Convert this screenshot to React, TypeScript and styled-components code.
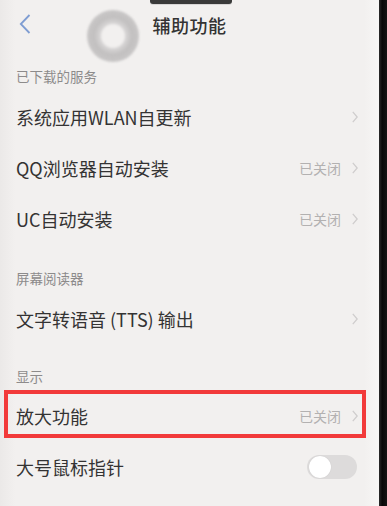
import styled, { createGlobalStyle } from "styled-components";

const BG = "#f2f0ef";
const TEXT = "#343333";
const MUTED = "#8d8b8b";
const HINT = "#b3b1b1";
const RED = "#f23a3a";

const GlobalStyle = createGlobalStyle`
  html, body {
    margin: 0;
    padding: 0;
    background: #0d0d0d;
  }
  body {
    font-family: "Noto Sans CJK SC", "Noto Sans", sans-serif;
  }
`;

const Device = styled.div`
  display: flex;
  width: 387px;
  height: 506px;
  overflow: hidden;
`;

const Screen = styled.div`
  position: relative;
  flex: 1;
  background: linear-gradient(90deg, #ebe9e8 0%, ${BG} 4%, ${BG} 96%, #f7f6f5 100%);
  display: flex;
  flex-direction: column;
`;

const Bezel = styled.div`
  width: 8px;
  background: linear-gradient(90deg, #2a2a2a, #080808 40%, #141414);
`;

const Notch = styled.div`
  position: absolute;
  top: 0;
  left: 150px;
  width: 82px;
  height: 4px;
  background: #3a3a3a;
  border-radius: 0 0 3px 3px;
  box-shadow: 0 1px 0 #d8d6d6;
`;

const NavBar = styled.div`
  position: relative;
  height: 50px;
  display: flex;
  align-items: center;
  justify-content: center;
`;

const Back = styled.svg`
  position: absolute;
  left: 19px;
  top: 14px;
`;

const Title = styled.div`
  font-size: 18px;
  font-weight: 500;
  color: ${TEXT};
  letter-spacing: 0.5px;
`;

const TouchRing = styled.div`
  position: absolute;
  left: 87px;
  top: 10px;
  width: 52px;
  height: 52px;
  border-radius: 50%;
  background: radial-gradient(
    circle,
    #f2f0ef 0 11px,
    #d6d4d4 13px,
    #c2c0c0 19px,
    #c9c7c7 26px
  );
  filter: blur(0.8px);
`;

const SectionHeader = styled.div<{ $top: number; $bottom: number }>`
  padding: ${(p) => p.$top}px 16px ${(p) => p.$bottom}px;
  font-size: 13.5px;
  line-height: 17px;
  color: ${MUTED};
`;

const Row = styled.div`
  position: relative;
  height: 51px;
  display: flex;
  align-items: center;
  padding: 0 21px 0 16px;
`;

const Label = styled.div`
  flex: 1;
  font-size: 18px;
  color: ${TEXT};
  white-space: nowrap;
`;

const Status = styled.span`
  font-size: 14px;
  color: ${HINT};
  margin-right: 11px;
`;

const Chevron = () => (
  <svg width="6" height="12" viewBox="0 0 6 12">
    <path d="M0.8 0.8 L5.2 6 L0.8 11.2" fill="none" stroke="#cfcdcd" strokeWidth="1.3" />
  </svg>
);

const Highlight = styled.div`
  position: absolute;
  left: 4px;
  right: 13px;
  top: 0;
  height: 48px;
  border: 4px solid ${RED};
  box-sizing: border-box;
  pointer-events: none;
`;

const Toggle = styled.div<{ $on?: boolean }>`
  width: 50px;
  height: 24px;
  border-radius: 12px;
  background: ${(p) => (p.$on ? "#4a8bf0" : "#dddbdb")};
  display: flex;
  align-items: center;
  padding: 0 2px;
  box-sizing: border-box;
  justify-content: ${(p) => (p.$on ? "flex-end" : "flex-start")};
  margin-right: 1px;
`;

const Knob = styled.div`
  width: 22px;
  height: 22px;
  border-radius: 50%;
  background: #ffffff;
  box-shadow: 0 0 1px rgba(0, 0, 0, 0.15);
`;

type Item = { label: string; status?: string };

const LinkRow = ({ label, status, highlighted }: Item & { highlighted?: boolean }) => (
  <Row>
    <Label>{label}</Label>
    {status && <Status>{status}</Status>}
    <Chevron />
    {highlighted && <Highlight />}
  </Row>
);

const downloaded: Item[] = [
  { label: "系统应用WLAN自更新" },
  { label: "QQ浏览器自动安装", status: "已关闭" },
  { label: "UC自动安装", status: "已关闭" },
];

const App = () => (
  <>
    <GlobalStyle />
    <Device>
      <Screen>
        <Notch />
        <NavBar>
          <Back width="12" height="20" viewBox="0 0 12 20">
            <path d="M10.5 1 L1.8 10 L10.5 19" fill="none" stroke="#7f9dd2" strokeWidth="1.8" />
          </Back>
          <Title>辅助功能</Title>
          <TouchRing />
        </NavBar>

        <SectionHeader $top={18} $bottom={6}>已下载的服务</SectionHeader>
        {downloaded.map((item) => (
          <LinkRow key={item.label} {...item} />
        ))}

        <SectionHeader $top={26} $bottom={6}>屏幕阅读器</SectionHeader>
        <LinkRow label="文字转语音 (TTS) 输出" />

        <SectionHeader $top={24} $bottom={5}>显示</SectionHeader>
        <LinkRow label="放大功能" status="已关闭" highlighted />
        <Row>
          <Label>大号鼠标指针</Label>
          <Toggle>
            <Knob />
          </Toggle>
        </Row>
      </Screen>
      <Bezel />
    </Device>
  </>
);

export default App;
